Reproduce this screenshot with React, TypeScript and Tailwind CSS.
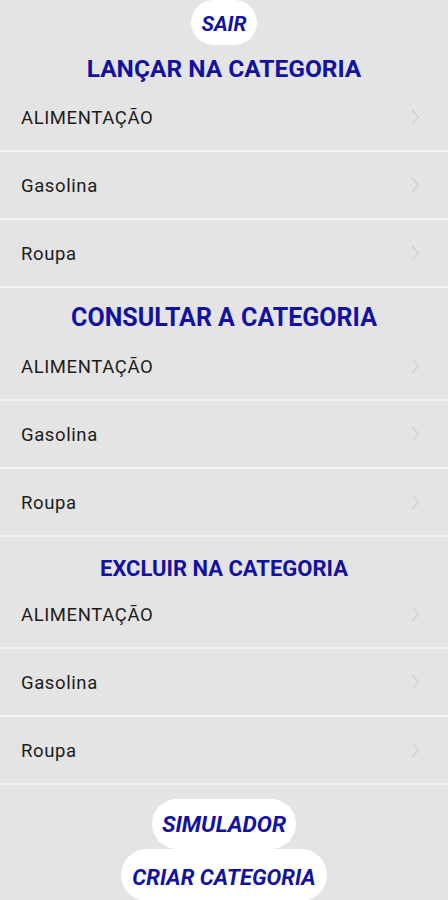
import React from "react";

const items = ["ALIMENTAÇÃO", "Gasolina", "Roupa"];

function Chevron() {
  return (
    <svg width="9" height="16" viewBox="0 0 9 16" fill="none" className="mr-[28px]">
      <path d="M1.5 1.5 L7.5 8 L1.5 14.5" stroke="#cfcfcf" strokeWidth="1.3" strokeLinecap="round" strokeLinejoin="round" />
    </svg>
  );
}

function Rows() {
  return (
    <div className="flex shrink-0 flex-col">
      {items.map((t) => (
        <div key={t} className="flex h-[68px] shrink-0 items-center justify-between border-b-2 border-[#f3f3f3] pl-[21px]">
          <span className="pt-[3px] text-[18.5px] tracking-[0.6px] text-[#1c1c1c]">{t}</span>
          <Chevron />
        </div>
      ))}
    </div>
  );
}

export default function App() {
  return (
    <div
      className="flex h-[900px] w-full flex-col overflow-hidden bg-[#e4e4e4]"
      style={{ fontFamily: "Roboto, 'Noto Sans', sans-serif" }}
    >
      <div className="flex shrink-0 justify-center">
        <div className="flex h-[45px] w-[66px] items-center justify-center rounded-full bg-white pt-[5px] text-[21px] font-bold italic text-[#12129f]">
          SAIR
        </div>
      </div>
      <div className="flex h-[39px] shrink-0 justify-center pt-[10px] text-[24.5px] font-bold leading-[28px] text-[#12129f]">
        LANÇAR NA CATEGORIA
      </div>
      <Rows />
      <div className="flex h-[45px] shrink-0 justify-center pt-[15px] text-[25px] font-bold leading-[30px] text-[#12129f]">
        CONSULTAR A CATEGORIA
      </div>
      <Rows />
      <div className="flex h-[44px] shrink-0 justify-center pt-[19px] text-[22px] font-bold leading-[26px] text-[#12129f]">
        EXCLUIR NA CATEGORIA
      </div>
      <Rows />
      <div className="mt-[14px] flex shrink-0 flex-col items-center">
        <div className="flex h-[50px] items-center justify-center rounded-full bg-white px-[10px] pt-[3px] text-[22.7px] font-bold italic text-[#12129f]">
          SIMULADOR
        </div>
        <div className="flex h-[52px] items-center justify-center rounded-full bg-white px-[11px] pt-[4px] text-[22px] font-bold italic text-[#12129f]">
          CRIAR CATEGORIA
        </div>
      </div>
    </div>
  );
}
